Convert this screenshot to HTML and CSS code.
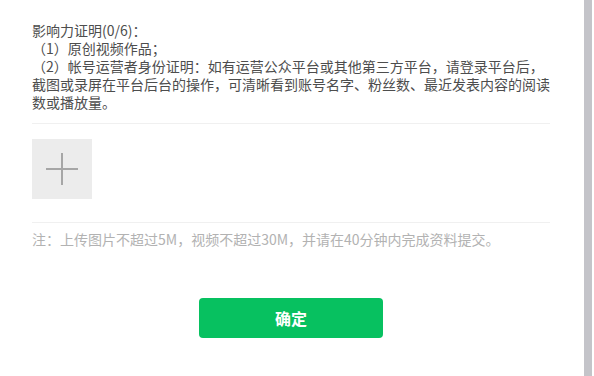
FILE: index.html
```html
<!DOCTYPE html>
<html>
<head>
    <meta charset="UTF-8">
    <title>影响力证明</title>
    <link rel="stylesheet" href="styles.css">
</head>
<body>
    <div class="layout">
        <div class="page">
            <div class="content">
                <p class="desc">影响力证明(0/6)：<br>（1）原创视频作品；<br>（2）帐号运营者身份证明：如有运营公众平台或其他第三方平台，请登录平台后，截图或录屏在平台后台的操作，可清晰看到账号名字、粉丝数、最近发表内容的阅读数或播放量。</p>
                <div class="divider"></div>
                <div class="upload">
                    <svg width="32" height="32" viewBox="0 0 32 32">
                        <rect x="0" y="15" width="32" height="2" fill="#a6a6a6"/>
                        <rect x="15" y="0" width="2" height="32" fill="#a6a6a6"/>
                    </svg>
                </div>
                <div class="divider divider-bottom"></div>
                <p class="note">注：上传图片不超过5M，视频不超过30M，并请在40分钟内完成资料提交。</p>
                <div class="actions">
                    <button class="btn-primary">确定</button>
                </div>
            </div>
        </div>
        <div class="scrollbar"></div>
    </div>
</body>
</html>
```

FILE: styles.css
```css
html, body {
    margin: 0;
    padding: 0;
    background: #fff;
    font-family: "Noto Sans CJK SC", "Liberation Sans", sans-serif;
}
.layout {
    display: flex;
    height: 376px;
}
.page {
    flex: 1;
    padding: 21px 0 0 32px;
}
.content {
    width: 518px;
}
.desc {
    margin: 0;
    font-size: 14px;
    line-height: 18px;
    color: #4d4d4d;
}
.divider {
    border-top: 1px solid #f0f0f0;
    margin-top: 12px;
}
.upload {
    width: 60px;
    height: 60px;
    margin-top: 15px;
    background: #ececec;
    display: flex;
    align-items: center;
    justify-content: center;
}
.divider-bottom {
    margin-top: 23px;
}
.note {
    margin: 7px 0 0;
    font-size: 14px;
    line-height: 18px;
    color: #b2b2b2;
}
.actions {
    display: flex;
    justify-content: center;
    margin-top: 50px;
}
.btn-primary {
    width: 184px;
    height: 40px;
    border: 0;
    border-radius: 4px;
    background: #07c160;
    color: #fff;
    font-family: inherit;
    font-size: 16px;
    font-weight: 700;
    cursor: pointer;
}
.scrollbar {
    width: 8px;
    margin-right: 2px;
    background: #c4c4c9;
}
```
